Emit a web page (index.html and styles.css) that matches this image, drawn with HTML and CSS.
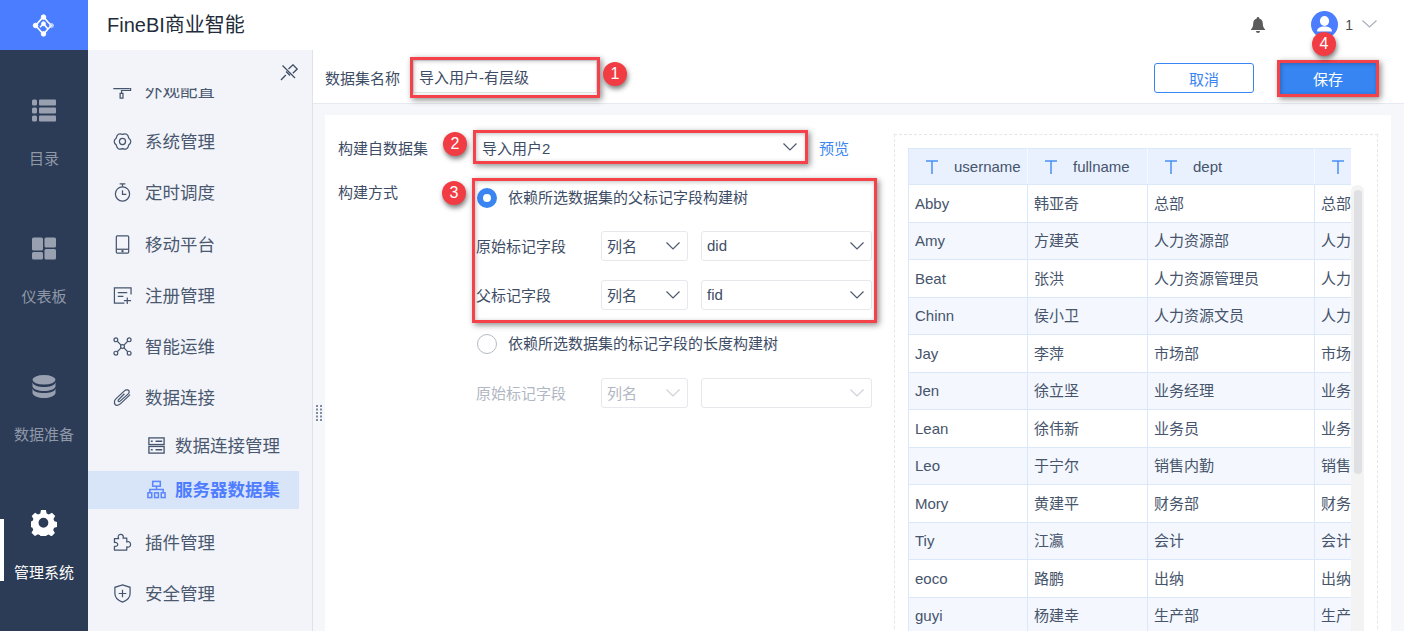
FILE: index.html
```html
<!DOCTYPE html>
<html lang="zh-CN">
<head>
<meta charset="utf-8">
<title>FineBI商业智能</title>
<link rel="stylesheet" href="styles.css">
</head>
<body>
<div class="app">
  <nav class="rail">
    <div class="logo">
      <svg width="23" height="23" viewBox="0 0 26 26" fill="none" stroke="#fff"><path d="M13 3 4 13l9 10 5-6-5-6-4 4M13 3l5 6 4 4-4 4" stroke-width="1.800"/><circle cx="13" cy="3.500" r="2.600" fill="#fff"/><circle cx="4" cy="13" r="2.600" fill="#fff"/><circle cx="13" cy="22.500" r="2.600" fill="#fff"/><circle cx="13" cy="11" r="2.200" fill="#fff"/><circle cx="22" cy="13" r="2" stroke-width="1.300" stroke="#dfe7ff"/></svg>
    </div>
    <div class="rail-list">
      <div class="rail-item">
        <svg class="rail-icon" viewBox="0 0 24 22" fill="#99a1b1"><rect y="0" width="5" height="6" rx="1.500"/><rect x="7" y="0" width="17" height="6" rx="1"/><rect y="8" width="5" height="6" rx="1.500"/><rect x="7" y="8" width="17" height="6" rx="1"/><rect y="16" width="5" height="6" rx="1.500"/><rect x="7" y="16" width="17" height="6" rx="1"/></svg>
        <span>目录</span>
      </div>
      <div class="rail-item">
        <svg class="rail-icon" viewBox="0 0 24 22" fill="#99a1b1"><rect width="11" height="13" rx="1.500"/><rect x="12.500" width="11.500" height="10" rx="1.500"/><rect y="14.500" width="11" height="7.500" rx="1.500"/><rect x="12.500" y="11.500" width="11.500" height="10.500" rx="1.500"/></svg>
        <span>仪表板</span>
      </div>
      <div class="rail-item">
        <svg class="rail-icon" viewBox="0 0 24 24" fill="#99a1b1"><ellipse cx="12" cy="5" rx="12" ry="5"/><path d="M0 7.500C1 11 6 12.500 12 12.500S23 11 24 7.500V12c-1 3-6 4.700-12 4.700S1 15 0 12z"/><path d="M0 14C1 17.500 6 18.800 12 18.800S23 17.500 24 14v5c-1 3-6 5-12 5S1 22 0 19z"/></svg>
        <span>数据准备</span>
      </div>
      <div class="rail-item rail-active">
        <svg class="rail-icon" viewBox="0 0 26 26"><path fill="#fff" fill-rule="evenodd" d="M10.500 0h5l.8 3.500 2.200 1 3.200-1.800 3.300 3.500-1.800 3 1 2.300 3 .8v5l-3.300.8-1 2.200 1.800 3.200-3.400 3.400-3-1.800-2.300 1-.6 3h-5l-.8-3.300-2.200-1-3.100 1.800-3.500-3.400 1.800-3.100-1-2.300-3-.7v-5l3.200-.8 1-2.200-1.800-3.100L4.400 2.700l3.100 1.800 2.300-1zM13 8a5 5 0 1 0 0 10 5 5 0 0 0 0-10z" transform="translate(-.3 0) scale(.98)"/></svg>
        <span>管理系统</span>
      </div>
    </div>
  </nav>

  <div class="main">
    <header class="topbar">
      <h1 class="title">FineBI商业智能</h1>
      <div class="user">
        <svg class="bell" width="16" height="16" viewBox="0 0 16 16" fill="#5b5b5b"><path d="M8 0a1.300 1.300 0 0 1 1.300 1.400C11.500 2 12.800 4 12.800 6.500c0 3 .9 4.500 2.200 5.800v.7H1v-.7c1.300-1.300 2.200-2.800 2.200-5.800C3.200 4 4.500 2 6.700 1.400A1.300 1.300 0 0 1 8 0z"/><path d="M6 14h4a2 2 0 0 1-4 0z"/></svg>
        <span class="avatar"><svg width="27" height="27" viewBox="0 0 27 27" fill="#fff"><ellipse cx="13.500" cy="10" rx="4.600" ry="5"/><path d="M6 20.500c0-3.500 3-5 7.500-5s7.500 1.500 7.500 5z"/></svg></span>
        <span class="user-name">1</span>
        <svg class="chev-user" width="15" height="8" viewBox="0 0 15 8" fill="none" stroke="#a9afbb" stroke-width="1.200"><path d="M.5.500 7.500 7l7-6.500"/></svg>
      </div>
    </header>

    <div class="body">
      <aside class="menu">
        <div class="pin-row">
          <svg width="18" height="17" viewBox="0 0 18 17" fill="none" stroke="#3f4d66" stroke-width="1.300"><path d="M8.500 5 13 .8 17.200 5l-4.400 4.300M2.500 1.500 15 14M1 16l4.800-5M6 7.500l4 4"/></svg>
        </div>
        <div class="menu-scroll">
          <div class="menu-list">
            <div class="menu-item">
              <svg class="mi" viewBox="0 0 20 20"><path d="M1 3v5h16V3M17 5h1.500v5H9v3M7.500 13h3v5h-3z"/></svg><span>外观配置</span>
            </div>
            <div class="menu-item">
              <svg class="mi" viewBox="0 0 20 20"><path d="M10 2.500Q15.500.5 16.500 6.250 21 10 16.500 13.750 15.500 19.500 10 17.500 4.500 19.500 3.500 13.750-1 10 3.500 6.250 4.500.5 10 2.500z"/><circle cx="10" cy="10" r="3.200"/></svg><span>系统管理</span>
            </div>
            <div class="menu-item">
              <svg class="mi" viewBox="0 0 20 20"><circle cx="10" cy="11.500" r="7.500"/><path d="M7 1h6M10 1v3M10 7.500v4.500h4"/></svg><span>定时调度</span>
            </div>
            <div class="menu-item">
              <svg class="mi" viewBox="0 0 20 20"><rect x="3.500" y="1" width="13" height="18" rx="1"/><path d="M3.500 15h13"/><circle cx="10" cy="17" r=".6"/></svg><span>移动平台</span>
            </div>
            <div class="menu-item">
              <svg class="mi" viewBox="0 0 20 20"><path d="M19 9V2H1.500v16H12M5 7h10M5 11h6M15 12v7M11.500 15.500h7.500"/></svg><span>注册管理</span>
            </div>
            <div class="menu-item">
              <svg class="mi" viewBox="0 0 20 20"><circle cx="3" cy="3" r="2"/><circle cx="17" cy="3" r="2"/><circle cx="3" cy="17" r="2"/><circle cx="17" cy="17" r="2"/><circle cx="10" cy="10" r="2"/><path d="m4.500 4.500 4 4M15.500 4.500l-4 4M4.500 15.500l4-4M15.500 15.500l-4-4"/></svg><span>智能运维</span>
            </div>
            <div class="menu-item">
              <svg class="mi" viewBox="0 0 20 20"><path d="M18 7 8 16.500c-2.500 2.500-6.500 2.500-6.500-1.500 0-1.500.5-2.500 1.500-3.500L12 3c2-2 5.500-1 5 1.500-.2 1-1 1.800-1.800 2.500L7.500 13.800c-1 1-2.500.2-2-1L12 6"/></svg><span>数据连接</span>
            </div>
            <div class="menu-sub">
              <svg class="si" viewBox="0 0 20 20"><rect x="2" y="2" width="16" height="7"/><rect x="2" y="11" width="16" height="7"/><path d="M9 5.500h7M9 14.500h7M4 5.500h2M4 14.500h2"/></svg><span>数据连接管理</span>
            </div>
            <div class="menu-sub menu-sub-active">
              <svg class="si si-on" viewBox="0 0 20 20"><rect x="6" y="1.500" width="8" height="5"/><path d="M10 6.500V10M3 13v-3h14v3"/><rect x="1" y="13.500" width="4" height="5"/><rect x="8" y="13.500" width="4" height="5"/><rect x="15" y="13.500" width="4" height="5"/></svg><span>服务器数据集</span>
            </div>
            <div class="menu-item">
              <svg class="mi" viewBox="0 0 20 20"><path d="M8 1.500c2.500 0 3.500 2 2.500 4h4v4c2-1 4 0 4 2.500s-2 3.500-4 2.500V18H1.500v-4c2 .5 3.500-.5 3.500-2S3 9.500 1.500 10V6H6C4.800 4 5.500 1.500 8 1.500z" stroke-linejoin="round"/></svg><span>插件管理</span>
            </div>
            <div class="menu-item">
              <svg class="mi" viewBox="0 0 20 20"><path d="M10 1 18 3.500V10c0 4.500-3.500 7.500-8 9-4.500-1.500-8-4.500-8-9V3.500zM10 6v8M6 10h8"/></svg><span>安全管理</span>
            </div>
          </div>
        </div>
      </aside>

      <section class="content">
        <div class="toolbar">
          <label class="name-label">数据集名称</label>
          <div class="name-input">导入用户-有层级</div>
          <button class="btn btn-ghost">取消</button>
          <button class="btn btn-solid">保存</button>
        </div>
        <div class="stage">
          <div class="card">
            <div class="form">
              <div class="form-row form-row-source">
                <span class="form-label">构建自数据集</span>
                <div class="source-line">
                  <div class="select select-source"><span>导入用户2</span><svg class="chev" viewBox="0 0 14 8"><path d="M.5.500 7 7l6.500-6.500"/></svg></div>
                  <a class="link">预览</a>
                </div>
              </div>
              <div class="form-row">
                <span class="form-label form-label-top">构建方式</span>
                <div class="method">
                  <div class="radio-line"><span class="radio radio-on"></span><span class="radio-text">依赖所选数据集的父标记字段构建树</span></div>
                  <div class="field-line">
                    <span class="field-label">原始标记字段</span>
                    <div class="select select-kind"><span>列名</span><svg class="chev" viewBox="0 0 14 8"><path d="M.5.500 7 7l6.500-6.500"/></svg></div>
                    <div class="select select-col"><span>did</span><svg class="chev" viewBox="0 0 14 8"><path d="M.5.500 7 7l6.500-6.500"/></svg></div>
                  </div>
                  <div class="field-line">
                    <span class="field-label">父标记字段</span>
                    <div class="select select-kind"><span>列名</span><svg class="chev" viewBox="0 0 14 8"><path d="M.5.500 7 7l6.500-6.500"/></svg></div>
                    <div class="select select-col"><span>fid</span><svg class="chev" viewBox="0 0 14 8"><path d="M.5.500 7 7l6.500-6.500"/></svg></div>
                  </div>
                  <div class="radio-line radio-line-second"><span class="radio"></span><span class="radio-text">依赖所选数据集的标记字段的长度构建树</span></div>
                  <div class="field-line field-line-off">
                    <span class="field-label">原始标记字段</span>
                    <div class="select select-kind"><span>列名</span><svg class="chev" viewBox="0 0 14 8"><path d="M.5.500 7 7l6.500-6.500"/></svg></div>
                    <div class="select select-col"><span></span><svg class="chev" viewBox="0 0 14 8"><path d="M.5.500 7 7l6.500-6.500"/></svg></div>
                  </div>
                </div>
              </div>
            </div>
            <div class="preview">
              <div class="table-wrap">
                <table class="grid">
                  <colgroup><col class="c1"><col class="c2"><col class="c3"><col class="c4"></colgroup>
                  <thead>
                    <tr>
                      <th><span class="th"><svg class="t-icon" viewBox="0 0 12 14"><path d="M0 1h12M6 1v13"/></svg>username</span></th>
                      <th><span class="th"><svg class="t-icon" viewBox="0 0 12 14"><path d="M0 1h12M6 1v13"/></svg>fullname</span></th>
                      <th><span class="th"><svg class="t-icon" viewBox="0 0 12 14"><path d="M0 1h12M6 1v13"/></svg>dept</span></th>
                      <th><span class="th"><svg class="t-icon" viewBox="0 0 12 14"><path d="M0 1h12M6 1v13"/></svg></span></th>
                    </tr>
                  </thead>
                  <tbody>
                    <tr><td>Abby</td><td>韩亚奇</td><td>总部</td><td>总部</td></tr>
                    <tr><td>Amy</td><td>方建英</td><td>人力资源部</td><td>人力资源部</td></tr>
                    <tr><td>Beat</td><td>张洪</td><td>人力资源管理员</td><td>人力资源管理员</td></tr>
                    <tr><td>Chinn</td><td>侯小卫</td><td>人力资源文员</td><td>人力资源文员</td></tr>
                    <tr><td>Jay</td><td>李萍</td><td>市场部</td><td>市场部</td></tr>
                    <tr><td>Jen</td><td>徐立坚</td><td>业务经理</td><td>业务经理</td></tr>
                    <tr><td>Lean</td><td>徐伟新</td><td>业务员</td><td>业务员</td></tr>
                    <tr><td>Leo</td><td>于宁尔</td><td>销售内勤</td><td>销售内勤</td></tr>
                    <tr><td>Mory</td><td>黄建平</td><td>财务部</td><td>财务部</td></tr>
                    <tr><td>Tiy</td><td>江瀛</td><td>会计</td><td>会计</td></tr>
                    <tr><td>eoco</td><td>路鹏</td><td>出纳</td><td>出纳</td></tr>
                    <tr><td>guyi</td><td>杨建幸</td><td>生产部</td><td>生产部</td></tr>
                  </tbody>
                </table>
              </div>
              <div class="scroll-track"><div class="scroll-thumb"></div></div>
            </div>
          </div>
        </div>
      </section>
    </div>
  </div>

  <svg class="grip" width="6" height="16" viewBox="0 0 6 16" fill="#7d8aa0"><rect width="2" height="2"/><rect x="4" width="2" height="2"/><rect y="3.500" width="2" height="2"/><rect x="4" y="3.500" width="2" height="2"/><rect y="7" width="2" height="2"/><rect x="4" y="7" width="2" height="2"/><rect y="10.500" width="2" height="2"/><rect x="4" y="10.500" width="2" height="2"/><rect y="14" width="2" height="2"/><rect x="4" y="14" width="2" height="2"/></svg>

  <div class="mark mark-1"></div>
  <div class="mark mark-2"></div>
  <div class="mark mark-3"></div>
  <div class="mark mark-4"></div>
  <div class="badge badge-1">1</div>
  <div class="badge badge-2">2</div>
  <div class="badge badge-3">3</div>
  <div class="badge badge-4">4</div>
</div>
</body>
</html>
```
FILE: styles.css
```css
* { box-sizing: border-box; }
html, body { margin: 0; height: 100%; overflow: hidden; }
body {
  font-family: "Liberation Sans", "Noto Sans CJK SC", sans-serif;
  color: #3e4d66;
  background: #fff;
}
.app { position: relative; display: flex; width: 1404px; height: 631px; overflow: hidden; }

/* rail */
.rail { flex: 0 0 88px; background: #2c3c57; display: flex; flex-direction: column; }
.logo { height: 50px; background: #4a7dff; display: flex; align-items: center; justify-content: center; padding-right: 2px; }
.rail-list { display: flex; flex-direction: column; gap: 68px; padding-top: 49px; }
.rail-item { position: relative; height: 70px; display: flex; flex-direction: column; align-items: center; gap: 27px; font-size: 15px; line-height: 20px; color: #8f98a7; }
.rail-icon { width: 24px; height: 23px; flex: none; }
.rail-active { color: #fff; }
.rail-active .rail-icon { width: 26px; height: 26px; margin-top: -3px; margin-bottom: 0; }
.rail-active::before { content: ""; position: absolute; left: 0; top: 6px; width: 4px; height: 62px; background: #fff; }

/* main */
.main { flex: 1; min-width: 0; display: flex; flex-direction: column; }
.topbar { flex: 0 0 50px; display: flex; align-items: center; padding: 0 27px 0 19px; background: #fff; }
.title { margin: 0; padding-bottom: 3px; font-size: 20px; font-weight: 400; color: #222c3a; }
.user { margin-left: auto; display: flex; align-items: center; }
.bell { margin-right: 45px; }
.avatar { width: 27px; height: 27px; border-radius: 50%; background: #4a7dff; display: block; margin-top: -2px; }
.avatar svg { display: block; }
.user-name { margin-left: 7px; font-size: 14px; color: #4a4a4a; }
.chev-user { margin-left: 9px; margin-top: -2px; }

.body { flex: 1; min-height: 0; display: flex; }

/* menu */
.menu { flex: 0 0 225px; background: #f2f4f9; border-right: 1px solid #dfe2e9; display: flex; flex-direction: column; font-size: 17.500px; color: #4a5870; }
.pin-row { flex: 0 0 38px; display: flex; justify-content: flex-end; padding: 14px 14px 0 0; }
.pin-row svg { display: block; }
.menu-scroll { flex: 1; overflow: hidden; }
.menu-list { margin-top: -24.500px; }
.menu-item { height: 51.300px; display: flex; align-items: center; gap: 13px; padding-left: 25px; }
.mi { width: 19px; height: 19px; flex: none; fill: none; stroke: #46556e; stroke-width: 1.300; margin-top: 2px; }
.menu-sub { height: 48.400px; padding-bottom: 5px; display: flex; align-items: center; gap: 9px; padding-left: 59px; }
.si { width: 19px; height: 19px; flex: none; fill: none; stroke: #46556e; stroke-width: 1.400; margin-top: 2px; }
.menu-sub-active { height: 38px; width: 211px; padding-bottom: 3px; margin-bottom: 6.500px; background: #d8e4f8; color: #4f7dff; font-weight: 700; }
.si-on { stroke: #5a86ff; stroke-width: 1.600; }

/* content */
.content { flex: 1; min-width: 0; display: flex; flex-direction: column; background: #f5f7fa; }
.toolbar { flex: 0 0 54px; display: flex; align-items: center; padding: 0 28px 0 12px; background: #fff; border-bottom: 1px solid #e6e9ef; font-size: 15px; }
.name-label { width: 88px; color: #3e4d66; padding-top: 2px; }
.name-input { width: 184px; height: 33px; line-height: 33px; padding-left: 5px; border: 1px solid #e2e5ea; color: #3e4d66; }
.btn { font: inherit; border-radius: 3px; padding: 0; }
.btn-ghost { width: 100px; height: 30px; margin: 3px 0 0 auto; background: #fff; color: #3a85f2; border: 1px solid #3a85f2; }
.btn-solid { width: 96px; height: 34px; margin: 3px 0 0 26px; background: #3685f2; color: #fff; border: 0; border-radius: 0; }

.stage { flex: 1; min-height: 0; padding: 11px 13px 0 12px; }
.card { height: 100%; background: #fff; display: flex; overflow: hidden; }

/* form */
.form { flex: 0 0 569px; padding: 18px 0 0 13px; font-size: 15px; display: flex; flex-direction: column; gap: 23px; }
.form-row { display: flex; }
.form-row-source { align-items: center; }
.form-label { flex: 0 0 138px; }
.form-label-top { line-height: 18px; }
.source-line { display: flex; align-items: center; gap: 14px; }
.link { color: #3a85f2; }
.select { display: flex; align-items: center; justify-content: space-between; border: 1px solid #e6e8ec; border-radius: 3px; background: #fff; padding: 0 7px 1px 5px; }
.select-source { width: 329px; height: 28px; border-color: #fff; padding-bottom: 0; }
.chev { width: 14px; height: 8px; fill: none; stroke: #4e5a70; stroke-width: 1.200; }
.select-kind { width: 87px; height: 30px; }
.select-col { width: 171px; height: 30px; }
.method { display: flex; flex-direction: column; gap: 19px; }
.radio-line { height: 28px; display: flex; align-items: center; gap: 11px; margin-left: 1px; }
.radio-text { padding-bottom: 3px; }
.radio-line-second { margin-top: 1px; }
.radio { width: 20px; height: 20px; border-radius: 50%; border: 1px solid #b4bac4; background: #fff; flex: none; }
.radio-on { border: 6px solid #3a85f2; }
.field-line { display: flex; align-items: center; }
.field-line-off { margin-top: 1px; color: #b1b7c3; }
.field-line-off .chev { stroke: #cdd1d8; }
.field-label { flex: 0 0 125px; padding-bottom: 1px; }
.select-kind + .select-col { margin-left: 13px; }

/* preview */
.preview { margin-top: 19px; width: 484px; height: 620px; border: 1px dashed #e6e6e6; padding: 13px 0 0 13px; display: flex; }
.table-wrap { width: 443px; overflow: hidden; flex: none; }
.grid { border-collapse: collapse; table-layout: fixed; width: 476px; font-size: 15px; color: #46546c; }
.c1 { width: 119px; }
.c2 { width: 120px; }
.c3 { width: 167px; }
.c4 { width: 70px; }
.grid th, .grid td { border: 1.500px solid #dbe8fb; white-space: nowrap; overflow: hidden; text-align: left; }
.grid th { height: 36px; background: #e9f1fe; font-weight: 400; padding: 0; border-right-color: #f4f8ff; }
.grid td { height: 37.500px; padding: 0 0 0 6px; }
.grid td + td { padding-bottom: 2px; }
.grid tbody tr:nth-child(even) td { background: #f4f7fd; }
.th { display: flex; align-items: center; gap: 16px; padding-left: 17px; }
.t-icon { width: 12px; height: 14px; fill: none; stroke: #4a8ff5; stroke-width: 1.500; flex: none; }
.scroll-track { width: 13px; margin-top: 37px; background: #f3f3f3; border-radius: 6px 6px 0 0; padding: 5px 2px 0 3px; }
.scroll-thumb { height: 284px; background: #dfe0e3; border-radius: 4px; }

/* overlay */
.grip { position: absolute; left: 316px; top: 405px; }
.mark { position: absolute; border: 3px solid #f5414a; box-shadow: 2px 2px 6px rgba(0, 0, 0, .45), inset 1px 1px 4px rgba(0, 0, 0, .25); }
.mark-1 { left: 410px; top: 57px; width: 190px; height: 41px; }
.mark-2 { left: 473px; top: 130px; width: 335px; height: 34px; }
.mark-3 { left: 472px; top: 178px; width: 405px; height: 145px; }
.mark-4 { left: 1277px; top: 60px; width: 102px; height: 37px; }
.badge { position: absolute; width: 24px; height: 24px; border-radius: 50%; background: #f23c44; color: #fff; font-size: 16px; line-height: 24px; text-align: center; box-shadow: 1px 3px 5px rgba(0, 0, 0, .5); }
.badge-1 { left: 603px; top: 62px; }
.badge-2 { left: 443px; top: 132px; }
.badge-3 { left: 442px; top: 181px; }
.badge-4 { left: 1312px; top: 32px; }
```
